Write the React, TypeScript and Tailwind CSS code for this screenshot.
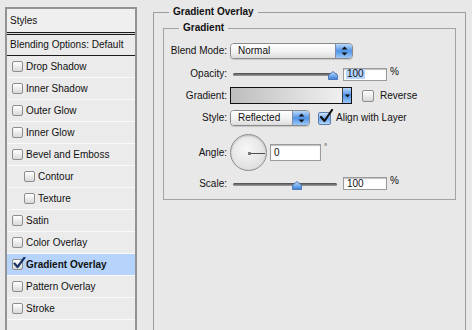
import type { ReactNode } from 'react';

const styleRows: { label: string; indent?: boolean; checked?: boolean }[] = [
  { label: 'Drop Shadow' },
  { label: 'Inner Shadow' },
  { label: 'Outer Glow' },
  { label: 'Inner Glow' },
  { label: 'Bevel and Emboss' },
  { label: 'Contour', indent: true },
  { label: 'Texture', indent: true },
  { label: 'Satin' },
  { label: 'Color Overlay' },
  { label: 'Gradient Overlay', checked: true },
  { label: 'Pattern Overlay' },
  { label: 'Stroke' },
  { label: '' },
];

export default function App() {
  return (
    <div className="w-[472px] h-[330px] overflow-hidden bg-[#e8e8e8] flex items-start pl-[5px] font-['Liberation_Sans',Arial,sans-serif] text-[10px] leading-none text-[#111]">
      <StylesList />
      <GradientPanel />
    </div>
  );
}

function StylesList() {
  return (
    <div className="mt-[7px] w-[132px] h-[340px] shrink-0 border-2 border-[#939393] bg-[#ebebeb] flex flex-col">
      <div className="h-[23px] bg-[#efefef] flex items-center pl-[3px]">Styles</div>
      <div className="h-[3px] border-y border-[#1c1c1c] bg-[#d6d6d6]" />
      <div className="h-[21px] border-b border-[#1c1c1c] flex items-center pl-[3px]">Blending Options: Default</div>
      {styleRows.map((r, i) => (
        <div
          key={i}
          className={
            'h-[22px] shrink-0 border-b border-[#fafafa] flex items-center gap-[3px] ' +
            (r.indent ? 'pl-[17px] ' : 'pl-[5px] ') +
            (r.checked ? 'bg-[#b6d4fb] font-bold' : '')
          }
        >
          {r.label && <ListCheck checked={r.checked} />}
          {r.label}
        </div>
      ))}
    </div>
  );
}

function ListCheck({ checked }: { checked?: boolean }) {
  return (
    <span className="relative w-[11px] h-[11px] rounded-[2px] border border-[#8d8d8d] bg-linear-to-b from-white to-[#d9d9d9] shrink-0">
      {checked && (
        <svg className="absolute -top-[3px] left-0" width="13" height="13" viewBox="0 0 13 13">
          <path d="M1.5 6.5 L4.5 10 L11.5 0.5" fill="none" stroke="#1d3566" strokeWidth="2.2" strokeLinecap="round" strokeLinejoin="round" />
        </svg>
      )}
    </span>
  );
}

function GradientPanel() {
  return (
    <fieldset className="ml-[16px] mt-[6px] w-[313px] h-[340px] shrink-0 border border-[#9b9b9b] px-0">
      <legend className="ml-[15px] px-[4px] h-[12px] leading-[12px] font-bold">Gradient Overlay</legend>
      <fieldset className="ml-[9px] mt-[4px] w-[293px] border border-[#a3a3a3] px-0 pb-[8px]">
        <legend className="ml-[15px] px-[4px] h-[12px] leading-[12px] font-bold">Gradient</legend>
        <Row label="Blend Mode:" className="mt-[9px] h-[16px]">
          <Select value="Normal" width="w-[123px]" />
        </Row>
        <Row label="Opacity:" className="mt-[7px] h-[16px]">
          <Slider thumb={98} />
          <NumberBox value="100" selected />
          <span className="ml-[3px] self-start mt-[1px]">%</span>
        </Row>
        <Row label="Gradient:" className="mt-[5px] h-[17px]">
          <GradientSwatch />
          <span className="ml-[10px] w-[12px] h-[12px] rounded-[2px] border border-[#8d8d8d] bg-linear-to-b from-white to-[#d9d9d9]" />
          <span className="ml-[6px]">Reverse</span>
        </Row>
        <Row label="Style:" className="mt-[6px] h-[16px]">
          <Select value="Reflected" width="w-[80px]" />
          <AquaCheck />
          <span className="ml-[5px]">Align with Layer</span>
        </Row>
        <Row label="Angle:" className="mt-[8px] h-[37px]">
          <Dial />
          <div className="ml-[3px] w-[51px] h-[17px] border border-[#9a9a9a] bg-white shadow-[inset_0_1px_1px_rgba(0,0,0,0.25)] flex items-center pl-[3px]">0</div>
          <span className="ml-[3px] self-start mt-[9px] text-[8px]">°</span>
        </Row>
        <Row label="Scale:" className="mt-[5px] h-[15px]">
          <Slider thumb={62} />
          <NumberBox value="100" />
          <span className="ml-[3px] self-start">%</span>
        </Row>
      </fieldset>
    </fieldset>
  );
}

function Row({ label, className, children }: { label: string; className: string; children: ReactNode }) {
  return (
    <div className={'flex items-center ' + className}>
      <span className="w-[63px] shrink-0 text-right">{label}</span>
      <div className="ml-[3px] flex items-center h-full">{children}</div>
    </div>
  );
}

function Select({ value, width }: { value: string; width: string }) {
  return (
    <div className={'h-[16px] flex rounded-[4px] border border-[#8a8a8a] overflow-hidden shadow-[0_1px_1px_rgba(0,0,0,0.15)] ' + width}>
      <div className="flex-1 flex items-center pl-[7px] bg-linear-to-b from-white via-[#f4f4f4] to-[#dcdcdc]">{value}</div>
      <div className="w-[17px] border-l border-[#7d8fa8] bg-linear-to-b from-[#b9d8fb] via-[#4f93e6] to-[#9cc7f6] flex flex-col items-center justify-center gap-[2px]">
        <svg width="7" height="4" viewBox="0 0 7 4"><path d="M0.5 3.5 L3.5 0.5 L6.5 3.5 Z" fill="#111" /></svg>
        <svg width="7" height="4" viewBox="0 0 7 4"><path d="M0.5 0.5 L3.5 3.5 L6.5 0.5 Z" fill="#111" /></svg>
      </div>
    </div>
  );
}

function Slider({ thumb }: { thumb: number }) {
  return (
    <div className="relative w-[110px] h-full">
      <div className="absolute left-[3px] right-[3px] top-1/2 h-[3px] -mt-px rounded-full bg-linear-to-b from-[#4a4a4a] to-[#a0a0a0]" />
      <svg className="absolute top-1/2 -mt-[3px]" style={{ left: thumb }} width="10" height="9" viewBox="0 0 10 9">
        <defs>
          <linearGradient id="th" x1="0" y1="0" x2="0" y2="1">
            <stop offset="0" stopColor="#bcdcfd" />
            <stop offset="1" stopColor="#3a7fdc" />
          </linearGradient>
        </defs>
        <path d="M0.5 4 L5 0.5 L9.5 4 V8.5 H0.5 Z" fill="url(#th)" stroke="#3d68a6" strokeWidth="0.8" />
      </svg>
    </div>
  );
}

function NumberBox({ value, selected }: { value: string; selected?: boolean }) {
  return (
    <div className="ml-[3px] w-[44px] h-[13px] border border-[#9a9a9a] bg-white shadow-[inset_0_1px_1px_rgba(0,0,0,0.25)] flex items-center pl-[2px]">
      <span className={selected ? 'bg-[#b5d5ff] px-px' : 'px-px'}>{value}</span>
    </div>
  );
}

function GradientSwatch() {
  return (
    <div className="w-[122px] h-[17px] border border-[#111] flex">
      <div className="flex-1 bg-linear-to-r from-[#bdbdbd] via-[#d8d8d8] to-[#efefef]" />
      <div className="w-[9px] border-l border-[#444] bg-linear-to-b from-[#b9d8fb] via-[#4f93e6] to-[#9cc7f6] flex items-center justify-center">
        <svg width="5" height="4" viewBox="0 0 5 4"><path d="M0 0.5 L5 0.5 L2.5 3.5 Z" fill="#111" /></svg>
      </div>
    </div>
  );
}

function AquaCheck() {
  return (
    <span className="relative ml-[8px] w-[13px] h-[13px] rounded-[2px] border border-[#5a7fb0] bg-linear-to-b from-[#cfe4fd] via-[#6aa5ee] to-[#b4d6fa] shrink-0">
      <svg className="absolute -top-[4px] left-0" width="15" height="15" viewBox="0 0 15 15">
        <path d="M2 8 L5.5 12 L13 1" fill="none" stroke="#111" strokeWidth="2.2" strokeLinecap="round" strokeLinejoin="round" />
      </svg>
    </span>
  );
}

function Dial() {
  return (
    <div className="relative w-[37px] h-[37px] rounded-full border border-[#8e8e8e] bg-[radial-gradient(circle_at_45%_40%,#f7f7f7,#e4e4e4_60%,#cfcfcf)] shadow-[inset_0_1px_2px_rgba(0,0,0,0.2)]">
      <div className="absolute left-1/2 top-1/2 w-[16px] h-px bg-[#4d4d4d]" />
      <div className="absolute left-1/2 top-1/2 w-[3px] h-[3px] -ml-px -mt-px bg-[#7a7a7a]" />
    </div>
  );
}
